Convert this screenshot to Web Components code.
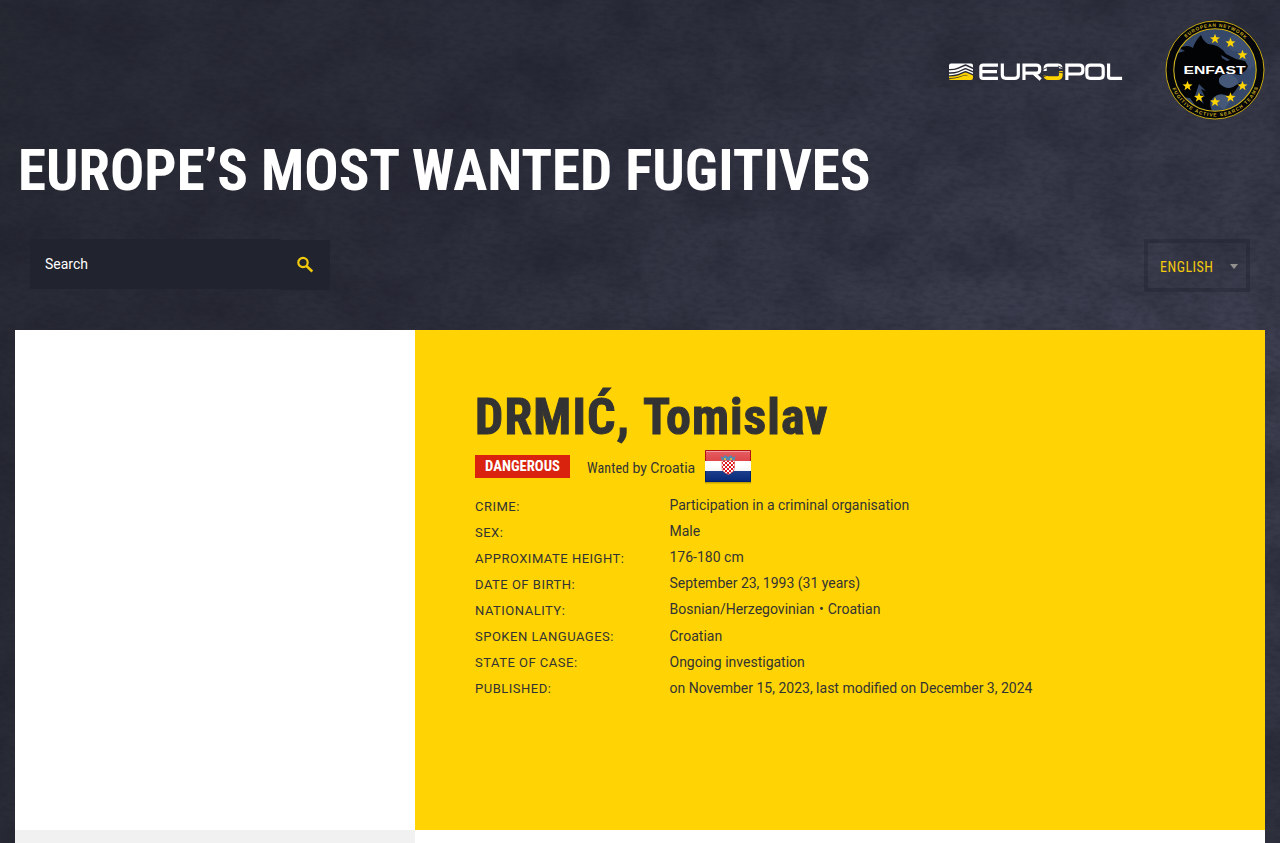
<!DOCTYPE html>
<html lang="en">
<head>
<meta charset="utf-8">
<title>Europe's Most Wanted Fugitives</title>
<style>
html,body{margin:0;height:100%;overflow:hidden;background:#292b38;font-family:Roboto,"Liberation Sans",sans-serif}
</style>
</head>
<body>
<wanted-page></wanted-page>
<script>
const define = (name, html, init) => customElements.define(name, class extends HTMLElement {
  constructor() {
    super();
    this.attachShadow({ mode: 'open' });
    this.shadowRoot.innerHTML = html;
  }
  connectedCallback() { if (init) init.call(this, this.shadowRoot); }
});

/* Condensed text, fitted to the width given in its w attribute. */
define('fit-text', `<style>:host{display:block;flex:none}svg{display:block;overflow:visible}
text{font-family:"Roboto Condensed",Roboto,"Liberation Sans",sans-serif;font-stretch:75%;fill:currentColor;stroke:currentColor;stroke-width:0}</style>
<svg><text x="0"></text></svg>`, function (root) {
  const w = +this.getAttribute('w'), s = +this.getAttribute('size'), h = Math.round(s * 1.2);
  const svg = root.querySelector('svg'), t = root.querySelector('text');
  svg.setAttribute('width', w); svg.setAttribute('height', h);
  t.textContent = this.getAttribute('text');
  t.setAttribute('y', Math.round(s));
  t.setAttribute('textLength', w);
  t.setAttribute('lengthAdjust', this.hasAttribute('stretch') ? 'spacingAndGlyphs' : 'spacing');
  t.style.fontSize = s + 'px';
  t.style.fontWeight = this.getAttribute('weight') || 400;
  t.style.strokeWidth = this.getAttribute('heavy') || 0;
});

define('europol-logo', `<style>:host{display:block;width:174px;height:17px}svg{display:block;overflow:visible}</style>
<svg width="174" height="17" viewBox="0 0 174 17">
<path fill="#fff" d="M0 2.500Q0 .5 2 .5H22Q24 .5 24 2.500V4.500L17.500 1.500Q16.500 1 15.500 1.500L9 4.500Q5 6.200 0 6ZM0 7.300Q5 7.500 9 6.100L15.500 3.300Q16.500 2.900 17.500 3.300L24 6.200V8.100L17.500 5.200Q16.500 4.800 15.500 5.200L9 8.200Q5 9.500 0 9.300ZM0 10.700Q5 10.900 9 9.500L15.500 6.800Q16.500 6.400 17.500 6.800L24 9.600V11.100L17.500 8.300Q16.500 7.900 15.500 8.300L9 11.100Q5 12.400 0 12.200Z"/>
<path fill="#ffd300" d="M0 13.500Q5 13.700 9 12.400L15.500 9.800Q16.500 9.400 17.500 9.800L24 12.500V15Q24 17 22 17H2Q0 17 0 15.800Q5 16 9 14.800L15.500 12.600Q16.500 12.200 17.500 12.600L20 13.600L17.500 12.100Q16.500 11.600 15.500 12L9 14Q5 15 0 14.900Z"/>
<g fill="none" stroke="#fff" stroke-width="3.200" transform="translate(.3 .5) scale(.993 1)">
<path d="M49 1.600H34Q31.800 1.600 31.800 3.500V13Q31.800 14.800 34 14.800H49M32 8.200H48"/>
<path d="M53.400 0V11.500Q53.400 14.800 57 14.800H66Q69.500 14.800 69.500 11.500V0"/>
<path d="M75.200 16.400V1.600H87.500Q91 1.600 91 4.500V6.500Q91 9.700 87.500 9.700H76M85 9.700L92 16"/>
<path d="M96.500 7.500V5Q96.500 1.600 100 1.600H109Q112.500 1.600 112.500 5"/>
<path stroke="#ffd300" stroke-width="3.800" d="M96.500 12Q97 14.600 100 14.600H109Q112.300 14.600 112.300 11.500V7.500"/>
<path d="M118.400 16.400V1.600H131Q134.500 1.600 134.500 5V7Q134.500 10.500 131 10.500H119"/>
<path d="M142 1.600H151.500Q155 1.600 155 5V11.500Q155 14.800 151.500 14.800H142Q138.500 14.800 138.500 11.500V5Q138.500 1.600 142 1.600Z"/>
<path d="M160.400 0V13Q160.400 14.800 162.500 14.800H174"/></g>
<path stroke="#292b38" stroke-width=".9" fill="none" d="M94 6.500L99 4M94 14L100 11.500M109 3L115 5.500M109 9L115 10"/>
</svg>`);

define('enfast-badge', `<style>:host{display:block;width:100px;height:100px}svg{display:block}
text{font-family:"Liberation Sans",sans-serif}</style>
<svg width="100" height="100" viewBox="0 0 100 100">
<defs><clipPath id="c"><circle cx="50" cy="50" r="40.500"/></clipPath>
<path id="t" d="M6.800 50A43.200 43.200 0 0 1 93.200 50"/><path id="b" d="M3.400 50A46.600 46.600 0 0 0 96.600 50"/>
<path id="s" d="M0-5.200L1.300-1.700L5-1.600L2.100.7L3.100 4.200L0 2.100L-3.100 4.200L-2.100.7L-5-1.600L-1.300-1.700Z"/></defs>
<circle cx="50" cy="50" r="49" fill="#05060a" stroke="#c6a911" stroke-width="1"/>
<circle cx="50" cy="50" r="41.200" fill="#35486a" stroke="#d4b512" stroke-width="1.100"/>
<g clip-path="url(#c)">
<path fill="#3f5172" d="M63 18L71 13L84 26L91 43L85 50L78 43L75 32L67 31L63 25Z"/><path fill="#465878" d="M54 57Q64 50 72 59Q76 68 69 72Q59 67 52 62ZM51 74Q57 70 61 75L66 80L59 90L51 84Z"/>
<path fill="#020305" d="M9 34L20 31L14 28Q23 24 28 28Q30 21 36 15Q38 21 43 24Q54 24 61 34L71 39L80 41L83 46L81 50L75 55Q64 52 57 55Q52 59 55 64Q61 70 68 67L76 62L71 70L65 77Q55 71 48 78Q43 82 47 91L32 88L25 78L5 76V31Z"/>
<path fill="#35486a" d="M56 35L65 40L62 41L57 38ZM34 64L41 71L36 69L40 77L34 73L39 84L30 76Z"/>
</g>
<g fill="#ffd400"><use href="#s" x="50" y="19"/><use href="#s" x="65.500" y="23"/><use href="#s" x="77.500" y="35"/><use href="#s" x="77.500" y="66"/><use href="#s" x="65.500" y="77.500"/><use href="#s" x="50" y="82"/><use href="#s" x="34" y="77.500"/><use href="#s" x="22.500" y="66"/></g>
<text x="18.500" y="54.300" font-size="11" font-weight="700" fill="#fff" textLength="62" lengthAdjust="spacingAndGlyphs">ENFAST</text>
<g fill="#c8ac1a" font-size="4.800" font-weight="700"><text><textPath href="#t" startOffset="36" textLength="65">EUROPEAN NETWORK</textPath></text>
<text><textPath href="#b" startOffset="19" textLength="109">FUGITIVE ACTIVE SEARCH TEAMS</textPath></text></g>
</svg>`);

define('search-box', `<style>:host{display:flex;width:300px;height:51px;color:#fff;font:14px/20px Roboto,sans-serif}
.field{width:235px;height:50px;padding-left:15px;background:#21232e;line-height:50px}
.go{width:50px;height:50px;margin-top:1px;background:#21232e;display:flex;align-items:center;justify-content:center}</style>
<div class="field">Search</div><div class="go"><svg width="18" height="18" viewBox="0 0 18 18" fill="none" stroke="#f3ca0c"><circle cx="7" cy="6.500" r="4.700" stroke-width="2.200"/><path d="M10.500 10L16.300 15.500" stroke-width="2.500"/></svg></div>`);

define('language-picker', `<style>:host{box-sizing:border-box;display:flex;align-items:center;width:106px;height:53px;border:4px solid rgba(30,31,43,.36);padding:1px 8px 0 12px;color:#f3ca0c}
i{margin-left:auto;border:4px solid transparent;border-top:5px solid #92918f;border-bottom:0}</style>
<fit-text text="ENGLISH" size="14" w="53"></fit-text><i></i>`);

define('croatia-flag', `<style>:host{display:block;width:46px;height:33px}svg{display:block;overflow:visible}</style>
<svg width="46" height="33" viewBox="0 0 46 33"><defs><linearGradient id="g" x2="0" y2="1"><stop stop-color="#fff" stop-opacity=".3"/><stop offset=".5" stop-color="#fff" stop-opacity=".12"/><stop offset="1" stop-color="#000" stop-opacity=".15"/></linearGradient>
<pattern id="p" width="4" height="4" patternUnits="userSpaceOnUse"><path fill="#fff" d="M0 0H4V4H0Z"/><path fill="#e01b22" d="M0 0H2V2H0ZM2 2H4V4H2Z"/></pattern></defs>
<path fill="#8c7400" opacity=".5" d="M0 32H46V33.500H0Z"/><path fill="#d91d22" d="M0 0H46V11H0Z"/><path fill="#fff" d="M0 11H46V21H0Z"/><path fill="#052d88" d="M0 21H46V32H0Z"/>
<path fill="url(#g)" d="M0 0H46V32H0Z"/>
<path fill="#5289ae" d="M15.500 6L18 7.500L20 5L23 7L26 5L28 7.500L30.500 6L29.500 11H17Z"/><path fill="#d4b04b" d="M19 8H21V10H19ZM25 8H27V10H25Z"/>
<path fill="url(#p)" stroke="#df5152" stroke-width=".6" d="M17 10.500H29.500V18Q29.500 22 23.500 24.500Q17 22 17 18Z"/>
<path fill="none" stroke="#b30f15" d="M.5 11V.5H45.500V11"/><path fill="none" stroke="#00206e" d="M.5 21V31.500H45.500V21"/><path stroke="#fff" stroke-opacity=".4" d="M1 1.500H45"/></svg>`);

define('fact-row', `<style>:host{display:grid;grid-template-columns:194.500px 1fr;height:26.110px;color:#333;font:14px/26px Roboto,sans-serif}
.k{font-size:13px;letter-spacing:.5px;padding-top:.65px;text-transform:uppercase;white-space:nowrap}.v{white-space:pre;margin-top:-1px}</style><div class="k"><slot name="key"></slot></div><div class="v"><slot></slot></div>`);

define('fugitive-card', `<style>:host{display:grid;grid-template-columns:400px 850px;grid-template-rows:500px 13px;background:#fff}
.info{background:#ffd304;padding:0 60px;color:#333}
.name{display:flex;gap:14px;padding-top:54px;height:66px}
.meta{display:flex;height:43px}
.tag{width:95px;height:23px;background:#d9230f;margin-top:5px;color:#fff;display:flex;box-sizing:border-box;padding:2px 10px}
.wanted{display:flex;gap:3px;margin:9px 0 0 17.400px;font-size:14px;line-height:18px;width:108px;white-space:nowrap}
croatia-flag{margin-left:9.600px}
.dot{margin:0 .5px 0 1px}
.foot{background:#f1f1f1}</style>
<div></div><div class="info">
<div class="name"><fit-text text="DRMIĆ," size="50" weight="700" heavy="1" w="154"></fit-text><fit-text text="Tomislav" size="50" weight="700" heavy="1" w="184.500"></fit-text></div>
<div class="meta"><div class="tag"><fit-text text="DANGEROUS" size="14" weight="700" stretch w="75"></fit-text></div><div class="wanted"><fit-text text="Wanted" size="14" w="42"></fit-text><span>by Croatia</span></div><croatia-flag></croatia-flag></div>
<fact-row><span slot="key">Crime:</span>Participation in a criminal organisation</fact-row>
<fact-row><span slot="key">Sex:</span>Male</fact-row>
<fact-row><span slot="key">Approximate height:</span>176-180 cm</fact-row>
<fact-row><span slot="key">Date of birth:</span>September 23, 1993 (31 years)</fact-row>
<fact-row><span slot="key">Nationality:</span>Bosnian/Herzegovinian <span class="dot">•</span> Croatian</fact-row>
<fact-row><span slot="key">Spoken languages:</span>Croatian</fact-row>
<fact-row><span slot="key">State of case:</span>Ongoing investigation</fact-row>
<fact-row><span slot="key">Published:</span>on November 15, 2023, last modified on December 3, 2024</fact-row>
</div><div class="foot"></div><div></div>`);

define('wall-texture', `<style>:host{position:absolute;inset:0;z-index:-1;display:block;background:radial-gradient(ellipse 800px 460px at 1180px 360px,#3f4152,rgba(63,65,82,0)),linear-gradient(100deg,#282b34,#2c2e3b 40%,#2f313f)}svg{display:block}</style>
<svg width="1280" height="843">
<filter id="n" x="0" y="0" width="100%" height="100%" color-interpolation-filters="sRGB"><feTurbulence type="fractalNoise" baseFrequency=".014 .018" numOctaves="7" seed="8"/><feColorMatrix values="0 0 0 0 .1  0 0 0 0 .1  0 0 0 0 .15  .8 0 0 0 -.29"/></filter>
<filter id="f" x="0" y="0" width="100%" height="100%" color-interpolation-filters="sRGB"><feTurbulence type="fractalNoise" baseFrequency=".12 .25" numOctaves="3" seed="3"/><feColorMatrix values="0 0 0 0 .1  0 0 0 0 .1  0 0 0 0 .15  .5 0 0 0 -.18"/></filter>
<rect width="1280" height="843" filter="url(#n)"/><rect width="1280" height="843" filter="url(#f)"/></svg>`);

define('wanted-page', `<style>:host{display:block;position:relative;z-index:0;width:1280px;height:843px;overflow:hidden}
.logos{display:flex;justify-content:flex-end;height:138px;padding-right:15px}
europol-logo{margin:63px 42px 0 0}enfast-badge{margin-top:20px}
.title{height:101px;padding-left:17.500px;color:#fff;box-sizing:border-box;display:flex}
.title fit-text{margin-top:-5px}
.tools{display:flex;justify-content:space-between;height:91px;padding:0 30px}
fugitive-card{margin:0 15px}</style>
<wall-texture></wall-texture><div class="logos"><europol-logo></europol-logo><enfast-badge></enfast-badge></div>
<div class="title"><fit-text text="EUROPE’S MOST WANTED FUGITIVES" size="57" weight="700" w="852.500"></fit-text></div>
<div class="tools"><search-box></search-box><language-picker></language-picker></div>
<fugitive-card></fugitive-card>`);
</script>
</body>
</html>
